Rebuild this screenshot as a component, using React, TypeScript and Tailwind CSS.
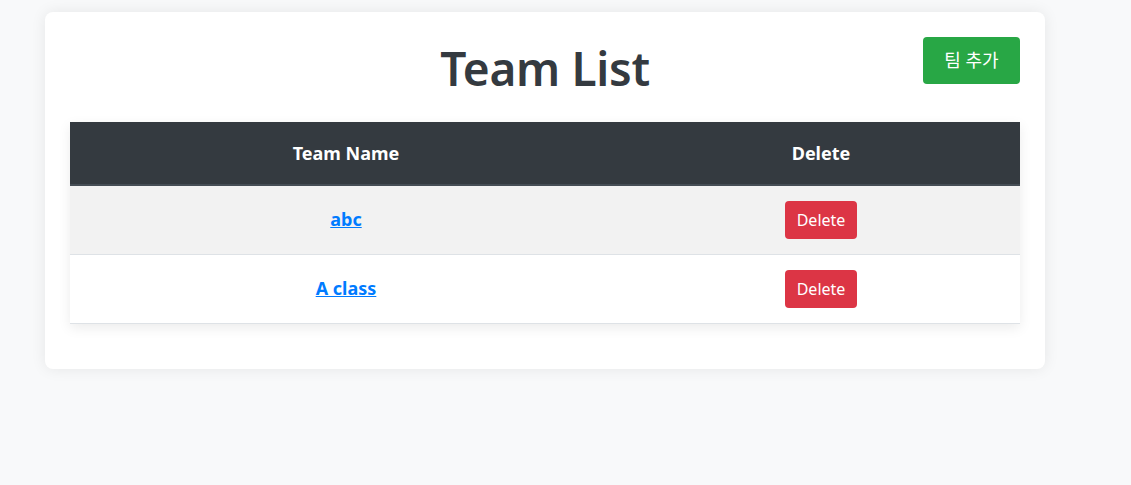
import { useState } from 'react'

type Team = { id: number; name: string }

export default function App() {
  const [teams, setTeams] = useState<Team[]>([
    { id: 1, name: 'abc' },
    { id: 2, name: 'A class' },
  ])

  // remove a team row
  const handleDelete = (id: number) => {
    setTeams(teams.filter((t) => t.id !== id))
  }

  return (
    <div
      className="min-h-screen bg-[#f8f9fa] pt-3"
      style={{ fontFamily: '"Noto Sans", "Noto Sans CJK KR", sans-serif' }}
    >
      <div className="ml-[45px] w-[1000px] rounded-lg bg-white p-[25px] pb-[45px] shadow-[0_0_15px_rgba(0,0,0,0.08)]">
        <div className="relative mb-5 flex h-[65px] items-start justify-center">
          <h1 className="text-[46px] font-semibold leading-[62px] tracking-[-0.3px] text-[#343a40]">Team List</h1>
          <button className="absolute right-0 top-0 h-[47px] w-[97px] rounded bg-[#28a745] text-[18px] text-white hover:bg-[#218838]">
            팀 추가
          </button>
        </div>

        <table className="w-full border-collapse shadow-[0_4px_12px_rgba(0,0,0,0.08)]">
          <thead>
            <tr className="bg-[#343a40] text-white">
              <th className="h-[63px] w-[552px] border-b-2 border-[#454d55] text-[18px] font-bold">Team Name</th>
              <th className="h-[63px] border-b-2 border-[#454d55] text-[18px] font-bold">Delete</th>
            </tr>
          </thead>
          <tbody>
            {teams.map((team, i) => (
              <tr key={team.id} className={i % 2 === 0 ? 'bg-[#f2f2f2]' : 'bg-white'}>
                <td className="h-[69px] border-b border-[#dee2e6] text-center">
                  <a href="#" className="text-[18px] font-bold text-[#007bff] underline">
                    {team.name}
                  </a>
                </td>
                <td className="h-[69px] border-b border-[#dee2e6] text-center">
                  <button
                    onClick={() => handleDelete(team.id)}
                    className="h-[38px] w-[72px] rounded bg-[#dc3545] text-[16px] text-white hover:bg-[#c82333]"
                  >
                    Delete
                  </button>
                </td>
              </tr>
            ))}
          </tbody>
        </table>
      </div>
    </div>
  )
}
